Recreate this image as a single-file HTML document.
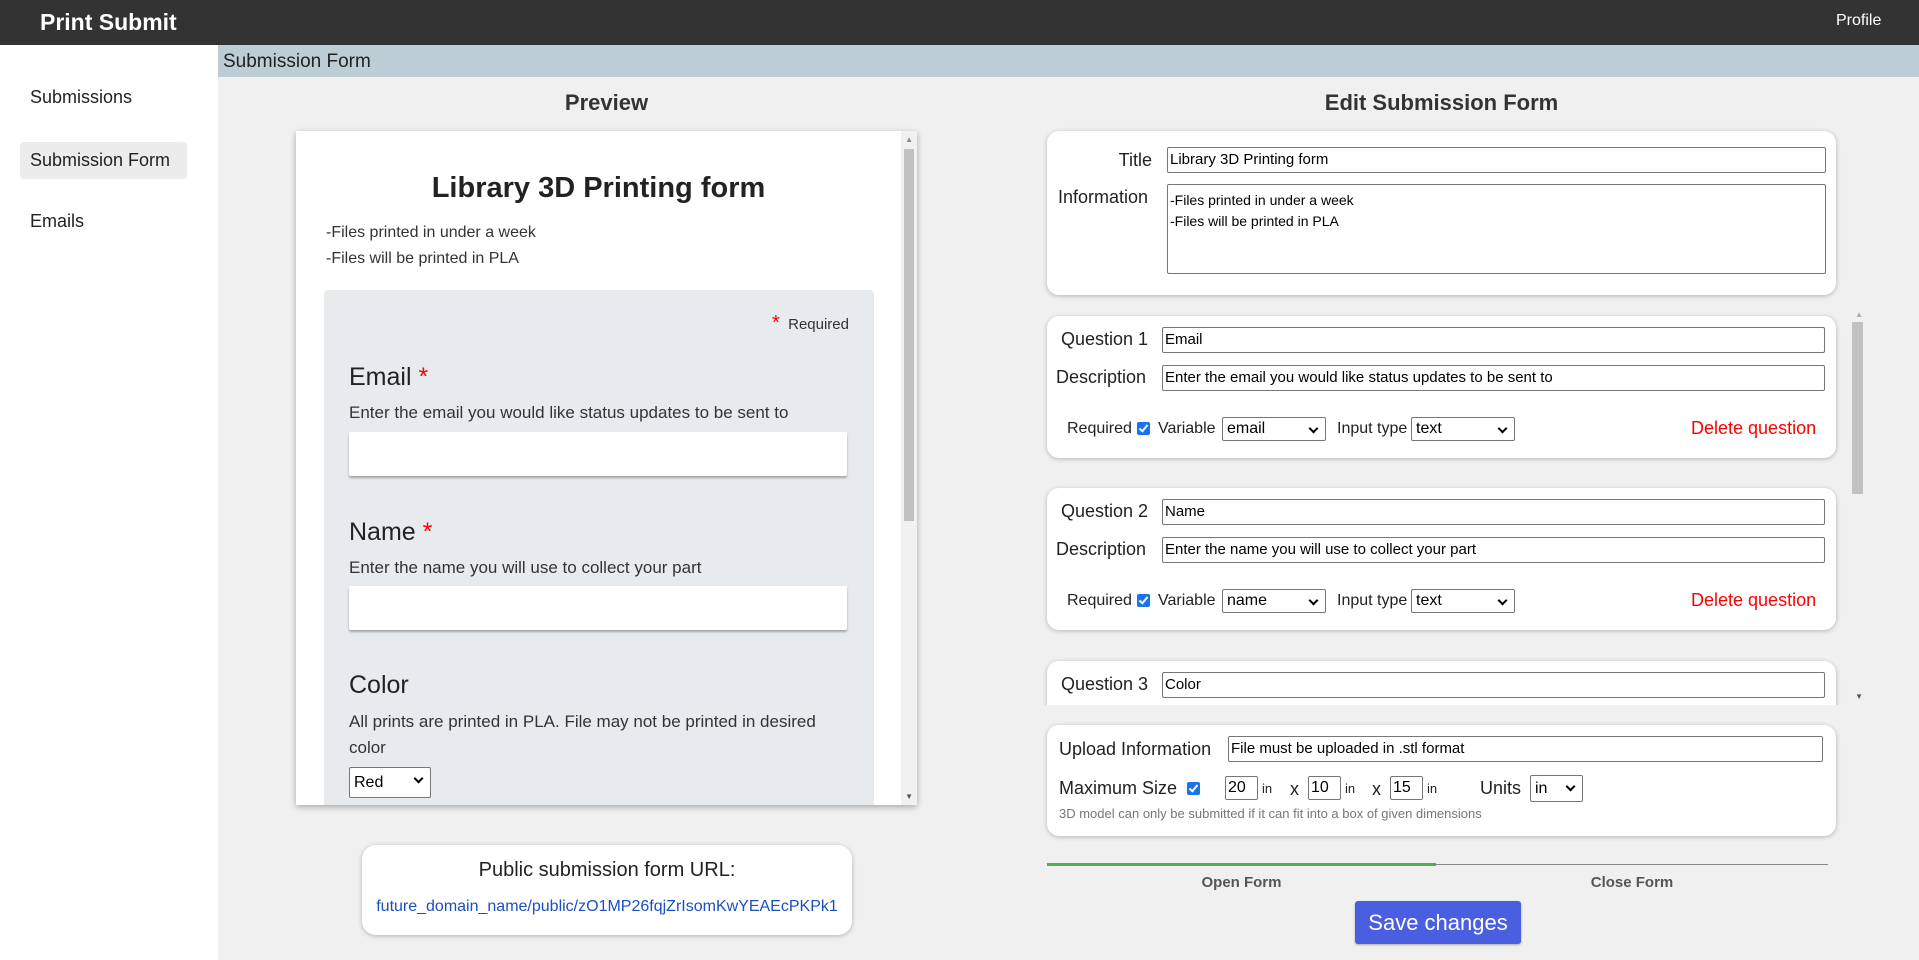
<!DOCTYPE html>
<html><head><meta charset="utf-8"><style>
*{box-sizing:border-box;margin:0;padding:0}
body{width:1919px;height:960px;overflow:hidden;background:#f0f0f0;font-family:"Liberation Sans",sans-serif;color:#222;position:relative}
.a{position:absolute}
.hdr{left:0;top:0;width:1919px;height:45px;background:#333}
.side{left:0;top:45px;width:218px;height:915px;background:#fff}
.card{background:#fff;border-radius:12px;box-shadow:0 1px 5px rgba(0,0,0,.25)}
.inp{position:absolute;border:1px solid #767676;border-radius:2px;background:#fff;font-size:15px;padding-left:2px;line-height:24px;color:#000;white-space:nowrap;overflow:hidden}
.sel{position:absolute;border:1px solid #767676;border-radius:2px;background:#fff;font-size:16px;padding-left:4px;line-height:22px;color:#000}
.sel:after{content:"";position:absolute;right:8px;top:7px;width:5px;height:5px;border-right:2px solid #000;border-bottom:2px solid #000;transform:rotate(45deg)}
.lbl{position:absolute;font-size:18px;color:#222;white-space:nowrap}
.cb{position:absolute;width:13px;height:13px;background:#1a73e8;border-radius:2px}
.cb:after{content:"";position:absolute;left:4px;top:1px;width:3px;height:7px;border-right:2px solid #fff;border-bottom:2px solid #fff;transform:rotate(40deg)}
.del{position:absolute;color:#f00;font-size:18px}
.pin{position:absolute;background:#fff;box-shadow:0 2px 2px rgba(0,0,0,.3);border-radius:2px}
</style></head><body>
<div class="a hdr"></div>
<div class="a" style="left:40px;top:9px;color:#fff;font-size:23px;font-weight:bold">Print Submit</div>
<div class="a" style="left:1836px;top:12px;color:#fff;font-size:16px">Profile</div>
<div class="a side"></div>
<div class="a" style="left:30px;top:87px;font-size:18px">Submissions</div>
<div class="a" style="left:20px;top:142px;width:167px;height:37px;background:#ececec;border-radius:4px"></div>
<div class="a" style="left:30px;top:150px;font-size:18px">Submission Form</div>
<div class="a" style="left:30px;top:211px;font-size:18px">Emails</div>
<div class="a" style="left:218px;top:45px;width:1701px;height:32px;background:#bccdd6"></div>
<div class="a" style="left:223px;top:51px;font-size:19px">Submission Form</div>

<div class="a" style="left:296px;top:90px;width:621px;text-align:center;font-size:22px;font-weight:bold;color:#333">Preview</div>
<div class="a" style="left:296px;top:131px;width:621px;height:674px;background:#fff;box-shadow:0 2px 6px rgba(0,0,0,.3);overflow:hidden">
 <div class="a" style="right:0;top:0;width:16px;height:674px;background:#f1f1f1"></div>
 <div class="a" style="right:3px;top:18px;width:10px;height:372px;background:#c1c1c1"></div>
 <div class="a" style="right:4px;top:4px;font-size:8px;color:#888">▲</div>
 <div class="a" style="right:4px;bottom:4px;font-size:8px;color:#555">▼</div>
 <div class="a" style="left:0;top:41px;width:605px;text-align:center;font-size:29px;font-weight:bold;color:#222">Library 3D Printing form</div>
 <div class="a" style="left:30px;top:89px;font-size:16px;color:#333;line-height:26px">-Files printed in under a week<br>-Files will be printed in PLA</div>
 <div class="a" style="left:28px;top:159px;width:550px;height:540px;background:#e8ebee;border-radius:4px">
  <div class="a" style="right:25px;top:22px;font-size:15px;color:#333"><span style="color:#f00;font-size:20px">*</span>&nbsp; Required</div>
  <div class="a" style="left:25px;top:73px;font-size:25px;color:#222">Email <span style="color:#f00">*</span></div>
  <div class="a" style="left:25px;top:113px;font-size:17px;color:#333">Enter the email you would like status updates to be sent to</div>
  <div class="pin" style="left:25px;top:142px;width:498px;height:44px"></div>
  <div class="a" style="left:25px;top:228px;font-size:25px;color:#222">Name <span style="color:#f00">*</span></div>
  <div class="a" style="left:25px;top:268px;font-size:17px;color:#333">Enter the name you will use to collect your part</div>
  <div class="pin" style="left:25px;top:296px;width:498px;height:44px"></div>
  <div class="a" style="left:25px;top:381px;font-size:25px;color:#222">Color</div>
  <div class="a" style="left:25px;top:419px;font-size:17px;color:#333;line-height:26px;width:480px">All prints are printed in PLA. File may not be printed in desired color</div>
  <div class="sel" style="left:25px;top:477px;width:82px;height:31px;line-height:29px">Red</div>
 </div>
</div>
<div class="a card" style="left:362px;top:845px;width:490px;height:90px;border-radius:14px"></div>
<div class="a" style="left:362px;top:859px;width:490px;text-align:center;font-size:20px;color:#222">Public submission form URL:</div>
<div class="a" style="left:362px;top:898px;width:490px;text-align:center;font-size:16px;color:#1a4fbf">future_domain_name/public/zO1MP26fqjZrIsomKwYEAEcPKPk1</div>

<div class="a" style="left:1047px;top:90px;width:789px;text-align:center;font-size:22px;font-weight:bold;color:#333">Edit Submission Form</div>
<div class="a card" style="left:1047px;top:131px;width:789px;height:164px"></div>
<div class="lbl" style="left:1100px;top:150px;width:52px;text-align:right">Title</div>
<div class="inp" style="left:1167px;top:147px;width:659px;height:26px">Library 3D Printing form</div>
<div class="lbl" style="left:1058px;top:187px">Information</div>
<div class="inp" style="left:1167px;top:184px;width:659px;height:90px;font-size:14px;line-height:21px;padding-top:5px;white-space:normal">-Files printed in under a week<br>-Files will be printed in PLA</div>

<div class="a" style="left:1040px;top:310px;width:830px;height:395px;overflow:hidden">
 <div class="a" style="right:5px;top:0;width:13px;height:395px;background:#f0f0f0"></div>
 <div class="a" style="right:7px;top:12px;width:11px;height:172px;background:#c1c1c1"></div>
 <div class="a" style="right:7px;top:0;font-size:8px;color:#aaa">▲</div>
 <div class="a" style="right:7px;top:382px;font-size:8px;color:#555">▼</div>
 <div class="a card" style="left:7px;top:6px;width:789px;height:142px"></div>
 <div class="lbl" style="left:21px;top:19px">Question 1</div>
 <div class="inp" style="left:122px;top:17px;width:663px;height:26px">Email</div>
 <div class="lbl" style="left:16px;top:57px">Description</div>
 <div class="inp" style="left:122px;top:55px;width:663px;height:26px">Enter the email you would like status updates to be sent to</div>
 <div class="lbl" style="left:27px;top:110px;font-size:16px">Required</div><div class="cb" style="left:97px;top:112px"></div>
 <div class="lbl" style="left:118px;top:110px;font-size:16px">Variable</div>
 <div class="sel" style="left:182px;top:107px;width:104px;height:24px">email</div>
 <div class="lbl" style="left:297px;top:110px;font-size:16px">Input type</div>
 <div class="sel" style="left:371px;top:107px;width:104px;height:24px">text</div>
 <div class="del" style="left:651px;top:108px">Delete question</div>

 <div class="a card" style="left:7px;top:178px;width:789px;height:142px"></div>
 <div class="lbl" style="left:21px;top:191px">Question 2</div>
 <div class="inp" style="left:122px;top:189px;width:663px;height:26px">Name</div>
 <div class="lbl" style="left:16px;top:229px">Description</div>
 <div class="inp" style="left:122px;top:227px;width:663px;height:26px">Enter the name you will use to collect your part</div>
 <div class="lbl" style="left:27px;top:282px;font-size:16px">Required</div><div class="cb" style="left:97px;top:284px"></div>
 <div class="lbl" style="left:118px;top:282px;font-size:16px">Variable</div>
 <div class="sel" style="left:182px;top:279px;width:104px;height:24px">name</div>
 <div class="lbl" style="left:297px;top:282px;font-size:16px">Input type</div>
 <div class="sel" style="left:371px;top:279px;width:104px;height:24px">text</div>
 <div class="del" style="left:651px;top:280px">Delete question</div>

 <div class="a card" style="left:7px;top:351px;width:789px;height:142px"></div>
 <div class="lbl" style="left:21px;top:364px">Question 3</div>
 <div class="inp" style="left:122px;top:362px;width:663px;height:26px">Color</div>
</div>

<div class="a card" style="left:1047px;top:725px;width:789px;height:111px"></div>
<div class="lbl" style="left:1059px;top:739px">Upload Information</div>
<div class="inp" style="left:1228px;top:736px;width:595px;height:26px">File must be uploaded in .stl format</div>
<div class="lbl" style="left:1059px;top:778px">Maximum Size</div><div class="cb" style="left:1187px;top:782px"></div>
<div class="inp" style="left:1225px;top:776px;width:33px;height:24px;font-size:16px;line-height:22px">20</div>
<div class="lbl" style="left:1262px;top:781px;font-size:13px">in</div>
<div class="lbl" style="left:1290px;top:779px">x</div>
<div class="inp" style="left:1308px;top:776px;width:33px;height:24px;font-size:16px;line-height:22px">10</div>
<div class="lbl" style="left:1345px;top:781px;font-size:13px">in</div>
<div class="lbl" style="left:1372px;top:779px">x</div>
<div class="inp" style="left:1390px;top:776px;width:33px;height:24px;font-size:16px;line-height:22px">15</div>
<div class="lbl" style="left:1427px;top:781px;font-size:13px">in</div>
<div class="lbl" style="left:1480px;top:778px">Units</div>
<div class="sel" style="left:1530px;top:775px;width:53px;height:27px;line-height:25px">in</div>
<div class="lbl" style="left:1059px;top:806px;font-size:13px;color:#777">3D model can only be submitted if it can fit into a box of given dimensions</div>

<div class="a" style="left:1047px;top:863px;width:389px;height:3px;background:#4caf50"></div>
<div class="a" style="left:1436px;top:864px;width:392px;height:1px;background:#888"></div>
<div class="a" style="left:1047px;top:874px;width:389px;text-align:center;font-size:15px;font-weight:bold;color:#555">Open Form</div>
<div class="a" style="left:1436px;top:874px;width:392px;text-align:center;font-size:15px;font-weight:bold;color:#555">Close Form</div>
<div class="a" style="left:1355px;top:901px;width:166px;height:43px;background:#4a5fe0;border-radius:3px;color:#fff;font-size:22px;text-align:center;line-height:43px;box-shadow:0 1px 2px rgba(0,0,0,.3)">Save changes</div>
</body></html>
